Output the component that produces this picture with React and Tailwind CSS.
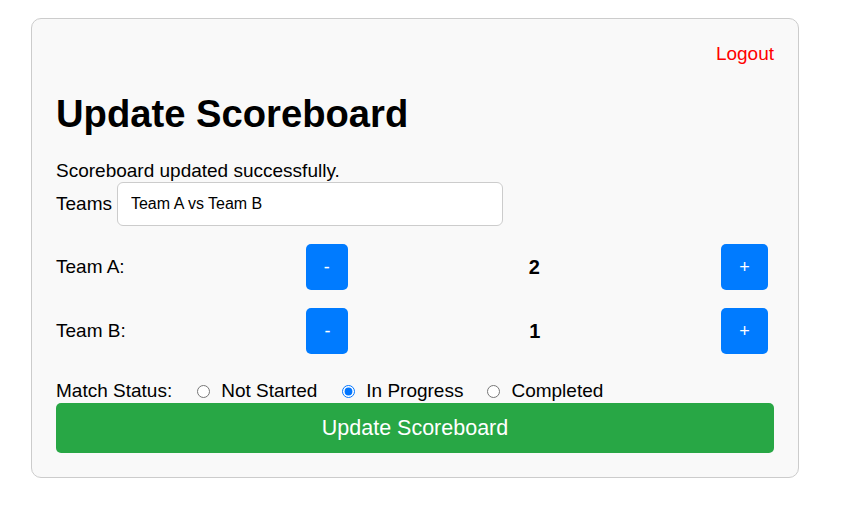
import React from "react";

export default function App() {
  const font = { fontFamily: '"Liberation Sans", Arial, sans-serif' };
  return (
    <div className="min-h-[507px] bg-white text-black" style={font}>
      <div className="pt-[18px] pl-[31px]">
        <div className="w-[768px] rounded-[10px] border border-[#cccccc] bg-[#f9f9f9] p-6">
          <div className="flex justify-end">
            <span className="text-[19px] leading-[22px] text-[#ff0000]">Logout</span>
          </div>
          <h1 className="mt-[27px] text-[38.2px] font-bold leading-[44px]">Update Scoreboard</h1>
          <p className="mt-[24px] text-[19px] leading-[22px]">Scoreboard updated successfully.</p>
          <div className="flex items-center">
            <label className="text-[19px] leading-[22px]">Teams</label>
            <input
              type="text"
              defaultValue="Team A vs Team B"
              className="ml-[5px] h-[44px] w-[386px] rounded-[6px] border border-[#cccccc] bg-white px-[13px] text-[16px] text-black outline-none"
              style={font}
            />
          </div>
          <div className="mt-[18px] flex items-center justify-between pr-[6px]">
            <span className="text-[19px] leading-[22px]">Team A:</span>
            <button className="h-[46px] w-[42px] rounded-[5px] bg-[#007bff] text-[18px] text-white">-</button>
            <span className="text-[20px] font-bold leading-[22px]">2</span>
            <button className="h-[46px] w-[47px] rounded-[5px] bg-[#007bff] text-[18px] text-white">+</button>
          </div>
          <div className="mt-[18px] flex items-center justify-between pr-[6px]">
            <span className="text-[19px] leading-[22px]">Team B:</span>
            <button className="h-[46px] w-[42px] rounded-[5px] bg-[#007bff] text-[18px] text-white">-</button>
            <span className="text-[20px] font-bold leading-[22px]">1</span>
            <button className="h-[46px] w-[47px] rounded-[5px] bg-[#007bff] text-[18px] text-white">+</button>
          </div>
          <div className="mt-[26px] flex items-center text-[19px] leading-[22px]">
            <span>Match Status:</span>
            <label className="ml-[25px] flex items-center">
              <input type="radio" name="status" className="m-0 h-[13px] w-[13px]" />
              <span className="ml-[11px]">Not Started</span>
            </label>
            <label className="ml-[25px] flex items-center">
              <input type="radio" name="status" defaultChecked className="m-0 h-[13px] w-[13px]" />
              <span className="ml-[11px]">In Progress</span>
            </label>
            <label className="ml-[24px] flex items-center">
              <input type="radio" name="status" className="m-0 h-[13px] w-[13px]" />
              <span className="ml-[11px]">Completed</span>
            </label>
          </div>
          <button className="mt-px h-[50px] w-full rounded-[5px] bg-[#28a745] text-[21.5px] text-white" style={font}>
            Update Scoreboard
          </button>
        </div>
      </div>
    </div>
  );
}
